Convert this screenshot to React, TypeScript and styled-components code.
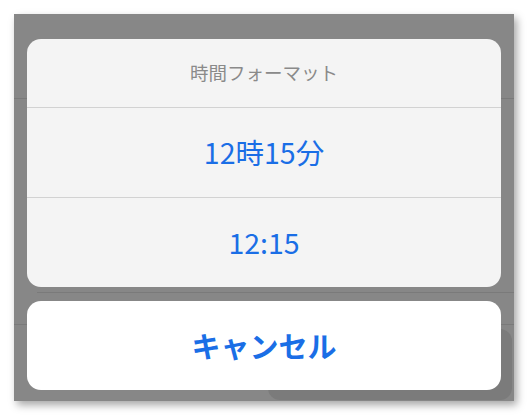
import React from 'react';
import styled, { createGlobalStyle } from 'styled-components';

const GlobalStyle = createGlobalStyle`
  html, body {
    margin: 0;
    padding: 0;
    background: #fff;
  }
  body {
    font-family: "Noto Sans CJK JP", "Noto Sans", sans-serif;
  }
`;

const Styles = {
  Page: styled.div`
    width: 528px;
    height: 416px;
    padding: 14px 14px 15px 14px;
    box-sizing: border-box;
  `,
  Frame: styled.div`
    display: grid;
    width: 500px;
    height: 387px;
    background: #878787;
    box-shadow: 3px 4px 8px rgb(0 0 0 / 35%);
    overflow: hidden;

    > * {
      grid-area: 1 / 1;
    }
  `,
  Underlay: styled.div`
    display: flex;
    flex-direction: column;
  `,
  UnderRow: styled.div<{ $height: number; $inset?: number }>`
    height: ${(p) => p.$height}px;
    flex-shrink: 0;
    margin-left: ${(p) => p.$inset ?? 0}px;
    border-bottom: 1px solid #7a7a7a;
  `,
  UnderButton: styled.div`
    align-self: flex-end;
    width: 244px;
    height: 71px;
    margin: 4px 2px 0 0;
    border-radius: 12px;
    background: #7b7b7b;
  `,
  Sheet: styled.div`
    display: flex;
    flex-direction: column;
    gap: 14px;
    padding: 25px 13px 11px 13px;
  `,
  Group: styled.div<{ $white?: boolean }>`
    display: flex;
    flex-direction: column;
    background: ${(p) => (p.$white ? '#ffffff' : '#f4f4f4')};
    border-radius: 14px;
    overflow: hidden;
  `,
  Title: styled.div`
    height: 69px;
    display: flex;
    align-items: center;
    justify-content: center;
    font-size: 18.5px;
    color: #8a8a8a;
    border-bottom: 1px solid #d2d2d2;
    padding-bottom: 3px;
    box-sizing: border-box;
  `,
  Action: styled.div<{ $bold?: boolean; $divider?: boolean; $height: number }>`
    height: ${(p) => p.$height}px;
    display: flex;
    align-items: center;
    justify-content: center;
    box-sizing: border-box;
    padding-bottom: 2px;
    font-size: ${(p) => (p.$bold ? 29 : 28.5)}px;
    font-weight: ${(p) => (p.$bold ? 700 : 400)};
    color: #1a6ee6;
    border-bottom: ${(p) => (p.$divider ? '1px solid #d2d2d2' : 'none')};
  `,
};

const App = () => {
  return (
    <>
      <GlobalStyle />
      <Styles.Page>
        <Styles.Frame>
          <Styles.Underlay>
            <Styles.UnderRow $height={84} />
            <Styles.UnderRow $height={193} $inset={23} />
            <Styles.UnderRow $height={31} />
            <Styles.UnderButton />
          </Styles.Underlay>

          <Styles.Sheet>
            <Styles.Group>
              <Styles.Title>時間フォーマット</Styles.Title>
              <Styles.Action $height={90} $divider>
                12時15分
              </Styles.Action>
              <Styles.Action $height={89}>12:15</Styles.Action>
            </Styles.Group>

            <Styles.Group $white>
              <Styles.Action $height={89} $bold>
                キャンセル
              </Styles.Action>
            </Styles.Group>
          </Styles.Sheet>
        </Styles.Frame>
      </Styles.Page>
    </>
  );
};

export default App;
